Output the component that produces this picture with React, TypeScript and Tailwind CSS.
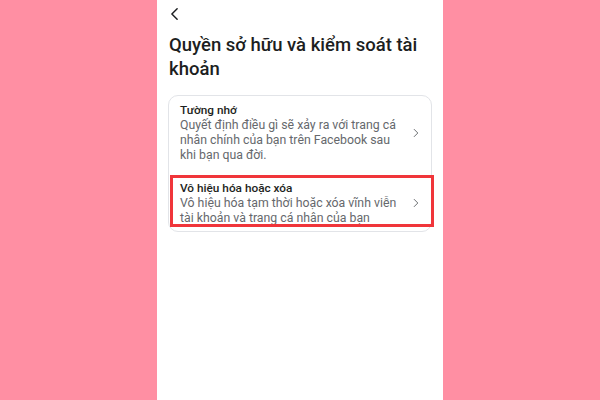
import React from "react";

function Chevron({ className }: { className?: string }) {
  return (
    <svg viewBox="0 0 10 16" className={className} fill="none" stroke="currentColor" strokeWidth="1.6" strokeLinecap="round" strokeLinejoin="round">
      <path d="M2 2l6 6-6 6" />
    </svg>
  );
}

export default function App() {
  return (
    <div className="w-[600px] h-[400px] bg-[#ff8fa3] flex justify-center overflow-hidden" style={{ fontFamily: "Roboto, 'Noto Sans', sans-serif" }}>
      <div className="w-[286px] h-full bg-white px-[11px]">
        <div className="pt-[7px] pl-[1px] h-[26px] flex items-start">
          <svg viewBox="0 0 12 16" className="w-[11px] h-[14px] text-[#1c1e21]" fill="none" stroke="currentColor" strokeWidth="1.7" strokeLinecap="round" strokeLinejoin="round">
            <path d="M9 2L3 8l6 6" />
          </svg>
        </div>
        <h1 className="mt-[7px] pl-[1px] text-[18.5px] leading-[24px] font-medium text-[#1c1e21]">
          Quyền sở hữu và kiểm soát tài khoản
        </h1>
        <div className="mt-[14px] border border-[#e2e4e8] rounded-[10px]">
          <div className="flex items-center pl-[11px] pr-[12px] pt-[6px] pb-[8px]">
            <div className="flex-1">
              <div className="text-[11.8px] leading-[16px] font-medium text-[#1c1e21]">Tường nhớ</div>
              <div className="text-[12.3px] leading-[15px] text-[#65686c]">
                Quyết định điều gì sẽ xảy ra với trang cá nhân chính của bạn trên Facebook sau khi bạn qua đời.
              </div>
            </div>
            <Chevron className="w-[6px] h-[10px] text-[#65686c] ml-3" />
          </div>
          <div className="relative flex items-center pl-[11px] pr-[12px] pt-[9px] pb-[5px]">
            <div className="flex-1">
              <div className="text-[11.8px] leading-[16px] font-medium text-[#1c1e21]">Vô hiệu hóa hoặc xóa</div>
              <div className="text-[12.3px] leading-[15px] text-[#65686c]">
                Vô hiệu hóa tạm thời hoặc xóa vĩnh viễn tài khoản và trang cá nhân của bạn
              </div>
            </div>
            <Chevron className="w-[6px] h-[10px] text-[#65686c] ml-3" />
            <div className="absolute left-[1px] -right-[3px] top-[4px] bottom-[4px] border-[3px] border-[#f0353a] pointer-events-none" />
          </div>
        </div>
      </div>
    </div>
  );
}
